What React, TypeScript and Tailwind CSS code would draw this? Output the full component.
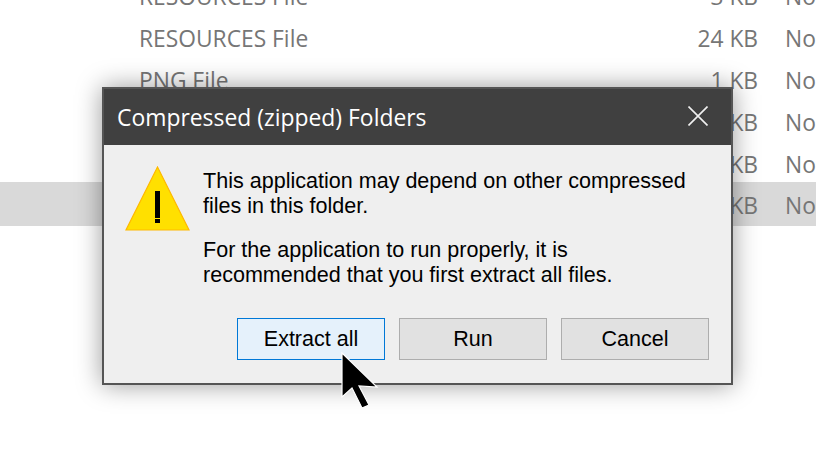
const rows = [
  { name: "RESOURCES File", size: "3 KB" },
  { name: "RESOURCES File", size: "24 KB" },
  { name: "PNG File", size: "1 KB" },
  { name: "", size: "2 KB" },
  { name: "", size: "4 KB" },
  { name: "", size: "8 KB", selected: true },
];

function Row({ name, size, selected }: { name: string; size: string; selected?: boolean }) {
  return (
    <div
      className={`flex items-center whitespace-nowrap text-[22.8px] text-[#767676] ${
        selected ? "mt-[-4px] h-[44px] bg-[#d9d9d9] pt-[5px]" : "h-[42px]"
      }`}
    >
      <div className="ml-[139px] w-[519px]">{name}</div>
      <div className="w-[102px] text-right">{size}</div>
      <div className="ml-[27px]">No</div>
    </div>
  );
}

function Btn({ label, primary }: { label: string; primary?: boolean }) {
  return (
    <button
      className={`h-[42px] w-[148px] border text-[21.5px] text-black ${
        primary ? "border-[#0078d7] bg-[#e5f1fb]" : "border-[#adadad] bg-[#e1e1e1]"
      }`}
    >
      {label}
    </button>
  );
}

export default function App() {
  return (
    <div className="relative h-[455px] w-[816px] overflow-hidden bg-white font-['Open_Sans',sans-serif]">
      <div className="mt-[-24px] flex flex-col">
        {rows.map((r, i) => (
          <Row key={i} {...r} />
        ))}
      </div>

      <div className="absolute left-[102px] top-[87px] flex h-[298px] w-[631px] flex-col border-2 border-t-0 border-[#555555] bg-[#efefef] font-['Liberation_Sans',sans-serif] shadow-[0_0_24px_rgba(0,0,0,0.4)]">
        <div className="flex h-[58px] items-center justify-between border-t-2 border-[#555555] bg-[#404040] pl-[13px] pr-[23px] font-['Open_Sans',sans-serif] text-[22.9px] text-white">
          <span className="mt-[2px]">Compressed (zipped) Folders</span>
          <svg width="20" height="20" viewBox="0 0 20 20" className="mb-[2px]">
            <path d="M0.5 0.5 L19.5 19.5 M19.5 0.5 L0.5 19.5" stroke="#f0f0f0" strokeWidth="1.6" fill="none" />
          </svg>
        </div>
        <div className="flex flex-1 flex-col">
          <div className="flex pl-[21px] pt-[21px]">
            <svg width="66" height="66" viewBox="0 0 66 66" className="shrink-0">
              <path d="M32.5 1 L64 64 L1 64 Z" fill="#ffe000" stroke="#ffb900" strokeWidth="1.2" />
              <rect x="30" y="25" width="5" height="27" fill="#000" />
              <rect x="30" y="53" width="5" height="4" fill="#000" />
            </svg>
            <div className="ml-[12px] text-[21.55px] leading-[25px] text-black">
              <p className="mt-[2px]">This application may depend on other compressed</p>
              <p>files in this folder.</p>
              <p className="mt-[19px]">For the application to run properly, it is</p>
              <p>recommended that you first extract all files.</p>
            </div>
          </div>
          <div className="mt-auto flex justify-end gap-[14px] pb-[23px] pr-[22px]">
            <Btn label="Extract all" primary />
            <Btn label="Run" />
            <Btn label="Cancel" />
          </div>
        </div>
      </div>

      <svg width="40" height="60" viewBox="0 0 40 60" className="absolute left-[340px] top-[351px]">
        <path d="M2 2 V46 L12 37 L22 57 L29 54 L19 35 L37 36 Z" fill="#000" stroke="#fff" strokeWidth="1.2" />
      </svg>
    </div>
  );
}
